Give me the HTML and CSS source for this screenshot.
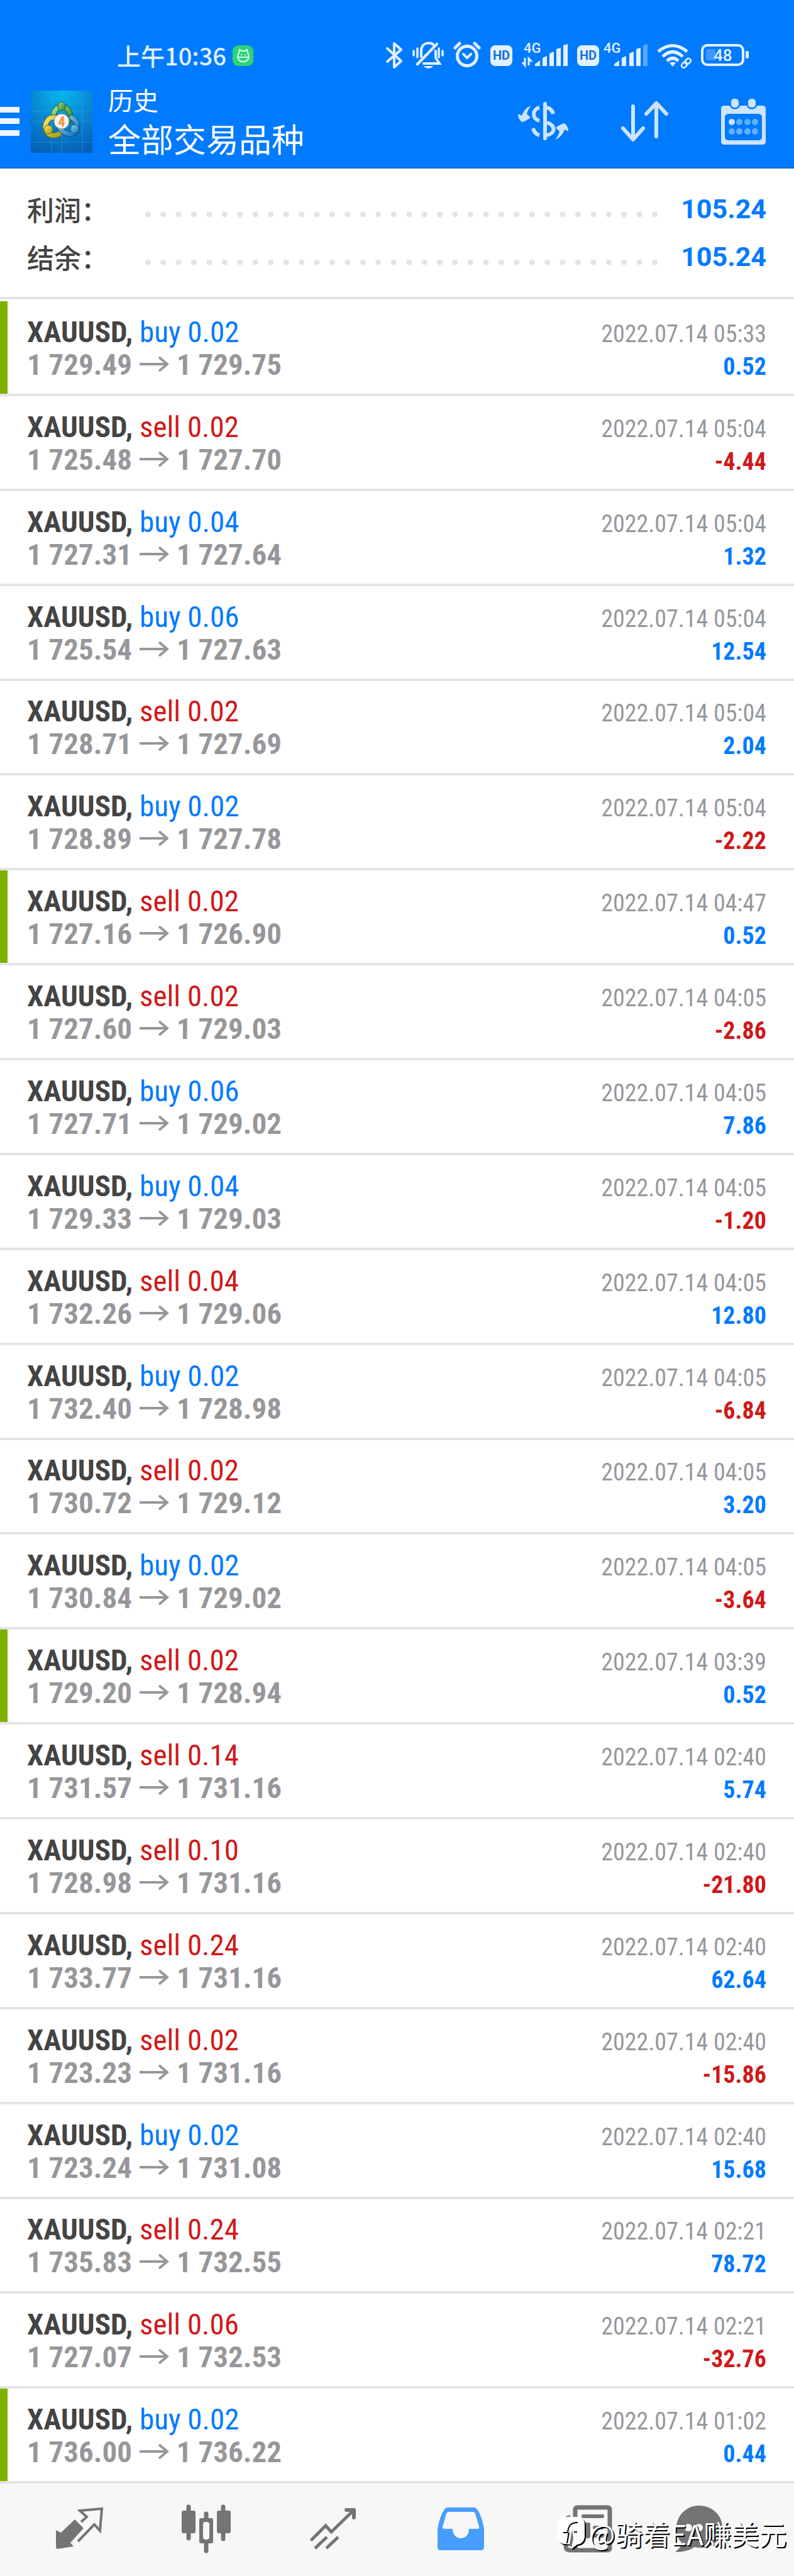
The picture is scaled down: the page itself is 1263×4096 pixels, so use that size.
FILE: index.html
```html
<!DOCTYPE html>
<html lang="zh-CN">
<head>
    <meta charset="utf-8">
    <meta name="viewport" content="width=device-width, initial-scale=1">
    <title>历史</title>
    <link rel="stylesheet" href="styles.css">
</head>
<body>

    <svg class="defs" aria-hidden="true">
        <symbol id="arrow" viewBox="0 0 47 26">
            <path d="M0 13H43M31 2L44 13L31 24" fill="none" stroke="currentColor" stroke-width="4" />
        </symbol>
    </svg>

    <header class="header">
        <div class="status">
            <span class="clock">上午10:36</span>
            <svg class="app-dot" width="33" height="33" viewBox="0 0 33 33">
                <rect width="33" height="33" rx="9" fill="#2bd672" />
                <path d="M10 12L11 7L14 9H20L23 7L24 12C28 19 25 26 17 26S6 19 10 12ZM8 19H26" fill="none" stroke="#e2f8ff" stroke-width="2" />
                <circle cx="14" cy="15" r="1" fill="#fff" />
                <circle cx="20" cy="15" r="1" fill="#fff" />
            </svg>
            <div class="tray">
                <svg width="27" height="44" viewBox="0 0 27 44">
                    <path d="M2 11L24 31L13 41V3L24 13L2 32" fill="none" stroke="#e2f1ff" stroke-width="4" stroke-linecap="round" stroke-linejoin="round" />
                </svg>
                <svg width="50" height="44" viewBox="0 0 50 44" fill="none" stroke="#e2f1ff" stroke-width="3.5" stroke-linecap="round">
                    <path d="M2 15V22M8 11V25M42 11V25M48 15V22" />
                    <path d="M14 24V14C15 0 32 0 35 7M37 15V26L43 35H18" stroke-width="4" />
                    <path d="M39 4L8 36" stroke-width="4.5" />
                    <path d="M18 39H33C30 44 21 44 18 39Z" fill="#e2f1ff" stroke="none" />
                </svg>
                <svg width="44" height="44" viewBox="0 0 44 44" fill="none" stroke="#e2f1ff" stroke-width="5" stroke-linecap="round">
                    <circle cx="22" cy="23" r="15.5" />
                    <path d="M16 20L22 26L28 20" stroke-width="4" />
                    <path d="M3 10L10 3M34 3L41 10" />
                </svg>
                <span class="hd">HD</span>
                <svg width="73" height="44" viewBox="0 0 73 44" fill="#e2f1ff">
                    <text x="3" y="18" class="net">4G</text>
                    <path d="M5 26V38L1 33M11 38V27L16 32" fill="none" stroke="#e2f1ff" stroke-width="3" />
                    <path d="M21 36L29 30V39H21ZM33 26L40 23V39H33ZM44 19L51 16V39H44ZM55 12L62 10V39H55ZM66 6L73 4V39H66Z" />
                </svg>
                <span class="hd">HD</span>
                <svg class="sim2" width="70" height="44" viewBox="0 0 70 44" fill="#e2f1ff">
                    <text x="0" y="18" class="net">4G</text>
                    <path d="M17 36L25 30V39H17ZM29 26L36 23V39H29ZM41 19L48 16V39H41ZM52 12L59 10V39H52Z" />
                    <path d="M63 6L70 4V39H63Z" fill="#5aa9ff" />
                </svg>
                <svg width="55" height="44" viewBox="0 0 55 44" fill="none" stroke="#e2f1ff" stroke-width="5">
                    <path d="M2 16Q25 -3 48 16M9 24Q25 9 41 24M16 31Q25 22 34 31" />
                    <path d="M20 34Q25 31 30 34L25 40Z" fill="#e2f1ff" stroke="none" />
                    <g stroke-width="2.5" transform="rotate(-45 46 34)">
                        <rect x="37" y="31" width="10" height="7" rx="3.5" />
                        <rect x="45" y="31" width="10" height="7" rx="3.5" />
                    </g>
                </svg>
                <svg width="77" height="44" viewBox="0 0 77 44">
                    <rect x="2" y="6" width="65" height="31" rx="8" fill="none" stroke="#e2f1ff" stroke-width="4" />
                    <path d="M11 12H23V30H11Q8 30 8 27V15Q8 12 11 12Z" fill="#4098ff" />
                    <rect x="71" y="15" width="5" height="12" rx="2" fill="#e2f1ff" />
                    <text x="20" y="31" class="level">48</text>
                </svg>
            </div>
        </div>

        <div class="toolbar">
            <button type="button" class="menu" aria-label="菜单">
                <svg width="31" height="46" viewBox="0 0 31 46" fill="#eef7ff">
                    <rect width="31" height="9" /><rect y="18" width="31" height="9" /><rect y="37" width="31" height="9" />
                </svg>
            </button>
            <svg class="logo" width="98" height="99" viewBox="0 0 98 99">
                <defs>
                    <radialGradient id="lbg" cx=".5" cy=".05" r="1">
                        <stop offset="0" stop-color="#08b6ee" />
                        <stop offset=".6" stop-color="#087dcb" />
                        <stop offset="1" stop-color="#0460b6" />
                    </radialGradient>
                    <linearGradient id="lg" x2="1" y2="1"><stop offset="0" stop-color="#a5dc8e" /><stop offset="1" stop-color="#2b8424" /></linearGradient>
                    <linearGradient id="ly" x2="1" y2="1"><stop offset="0" stop-color="#f0e766" /><stop offset="1" stop-color="#a49c12" /></linearGradient>
                    <linearGradient id="lb" x2="1" y2="1"><stop offset="0" stop-color="#8ed0f2" /><stop offset="1" stop-color="#1672b8" /></linearGradient>
                </defs>
                <rect width="98" height="99" fill="url(#lbg)" />
                <path d="M33 0V99M49 0V99M82 0V99M0 33H98M0 49H98M0 82H98" stroke="#45b5e5" stroke-opacity=".4" />
                <g fill="none" stroke-linecap="round">
                    <path d="M37 44C32 20 66 20 62 44C61 52 55 54 50 48" stroke="#17632b" stroke-width="9" />
                    <path d="M37 44C32 20 66 20 62 44C61 52 55 54 50 48" stroke="url(#lg)" stroke-width="7" />
                    <path d="M38 43C26 41 20 56 25 65C30 73 42 74 49 65" stroke="#625d15" stroke-width="9" />
                    <path d="M38 43C26 41 20 56 25 65C30 73 42 74 49 65" stroke="url(#ly)" stroke-width="7" />
                    <path d="M65 43C75 47 77 63 68 68C59 72 50 66 45 57" stroke="#0b4b85" stroke-width="9" />
                    <path d="M65 43C75 47 77 63 68 68C59 72 50 66 45 57" stroke="url(#lb)" stroke-width="7" />
                </g>
                <ellipse cx="49" cy="25" rx="6" ry="7" fill="url(#lg)" stroke="#17632b" />
                <circle cx="28" cy="62" r="7" fill="url(#ly)" stroke="#625d15" />
                <circle cx="70" cy="61" r="7" fill="url(#lb)" stroke="#0b4b85" />
                <circle cx="49" cy="49" r="12" fill="#f4f4f4" stroke="#8a8a8a" />
                <text x="49" y="57" text-anchor="middle" class="four">4</text>
            </svg>
            <div class="title">
                <div class="sub">历史</div>
                <h1>全部交易品种</h1>
            </div>
            <div class="actions">
                <button type="button" aria-label="货币">
                    <svg width="80" height="64" viewBox="0 0 80 64" fill="none" stroke="#cce4ff" stroke-width="6">
                        <path d="M43 4V59" stroke-linecap="round" />
                        <path d="M34 10C22 13 22 28 34 31M24 43Q26 52 34 54M46 10Q54 12 56 20M46 34C60 38 60 51 46 54" />
                        <path id="swap" d="M21 7C17 11 15 16 14 20L20 26Q12 32 6 33Q0 28 0 20L6 23Q10 11 21 7Z" fill="#cce4ff" stroke="none" />
                        <use href="#swap" transform="rotate(180 40 34)" />
                    </svg>
                </button>
                <button type="button" aria-label="排序">
                    <svg width="75" height="66" viewBox="0 0 75 66" fill="none" stroke="#cce4ff" stroke-width="6" stroke-linecap="round" stroke-linejoin="round">
                        <path d="M19 9V61M3 44L19 62L35 44M56 57V5M40 21L56 4L72 21" />
                    </svg>
                </button>
                <button type="button" aria-label="日期">
                    <svg width="72" height="75" viewBox="0 0 72 75" fill="#cce4ff">
                        <path d="M5 12H66Q71 12 71 17V69Q71 74 66 74H5Q0 74 0 69V17Q0 12 5 12ZM12 25Q6 25 6 31V61Q6 67 12 67H59Q65 67 65 61V31Q65 25 59 25Z" fill-rule="evenodd" />
                        <g stroke="#007aff" stroke-width="5" paint-order="stroke">
                            <rect x="16" y="1" width="12" height="14" rx="5" />
                            <rect x="43" y="1" width="12" height="14" rx="5" />
                        </g>
                        <circle cx="17" cy="38" r="5" />
                        <g fill="#66afff">
                            <circle cx="29" cy="38" r="5" /><circle cx="42" cy="38" r="5" /><circle cx="54" cy="38" r="5" />
                            <circle cx="17" cy="53" r="5" /><circle cx="29" cy="53" r="5" /><circle cx="42" cy="53" r="5" /><circle cx="54" cy="53" r="5" />
                        </g>
                    </svg>
                </button>
            </div>
        </div>
    </header>

    <dl class="summary">
        <div class="sum">
            <dt>利润：</dt>
            <dd>105.24</dd>
        </div>
        <div class="sum">
            <dt>结余：</dt>
            <dd>105.24</dd>
        </div>
    </dl>

    <ul class="deals">
        <li class="mark"><b>XAUUSD, <i class="buy">buy 0.02</i></b><time>2022.07.14 05:33</time><span class="price">1 729.49<svg><use href="#arrow" /></svg>1 729.75</span><em class="up">0.52</em></li>
        <li><b>XAUUSD, <i class="sell">sell 0.02</i></b><time>2022.07.14 05:04</time><span class="price">1 725.48<svg><use href="#arrow" /></svg>1 727.70</span><em class="down">-4.44</em></li>
        <li><b>XAUUSD, <i class="buy">buy 0.04</i></b><time>2022.07.14 05:04</time><span class="price">1 727.31<svg><use href="#arrow" /></svg>1 727.64</span><em class="up">1.32</em></li>
        <li><b>XAUUSD, <i class="buy">buy 0.06</i></b><time>2022.07.14 05:04</time><span class="price">1 725.54<svg><use href="#arrow" /></svg>1 727.63</span><em class="up">12.54</em></li>
        <li><b>XAUUSD, <i class="sell">sell 0.02</i></b><time>2022.07.14 05:04</time><span class="price">1 728.71<svg><use href="#arrow" /></svg>1 727.69</span><em class="up">2.04</em></li>
        <li><b>XAUUSD, <i class="buy">buy 0.02</i></b><time>2022.07.14 05:04</time><span class="price">1 728.89<svg><use href="#arrow" /></svg>1 727.78</span><em class="down">-2.22</em></li>
        <li class="mark"><b>XAUUSD, <i class="sell">sell 0.02</i></b><time>2022.07.14 04:47</time><span class="price">1 727.16<svg><use href="#arrow" /></svg>1 726.90</span><em class="up">0.52</em></li>
        <li><b>XAUUSD, <i class="sell">sell 0.02</i></b><time>2022.07.14 04:05</time><span class="price">1 727.60<svg><use href="#arrow" /></svg>1 729.03</span><em class="down">-2.86</em></li>
        <li><b>XAUUSD, <i class="buy">buy 0.06</i></b><time>2022.07.14 04:05</time><span class="price">1 727.71<svg><use href="#arrow" /></svg>1 729.02</span><em class="up">7.86</em></li>
        <li><b>XAUUSD, <i class="buy">buy 0.04</i></b><time>2022.07.14 04:05</time><span class="price">1 729.33<svg><use href="#arrow" /></svg>1 729.03</span><em class="down">-1.20</em></li>
        <li><b>XAUUSD, <i class="sell">sell 0.04</i></b><time>2022.07.14 04:05</time><span class="price">1 732.26<svg><use href="#arrow" /></svg>1 729.06</span><em class="up">12.80</em></li>
        <li><b>XAUUSD, <i class="buy">buy 0.02</i></b><time>2022.07.14 04:05</time><span class="price">1 732.40<svg><use href="#arrow" /></svg>1 728.98</span><em class="down">-6.84</em></li>
        <li><b>XAUUSD, <i class="sell">sell 0.02</i></b><time>2022.07.14 04:05</time><span class="price">1 730.72<svg><use href="#arrow" /></svg>1 729.12</span><em class="up">3.20</em></li>
        <li><b>XAUUSD, <i class="buy">buy 0.02</i></b><time>2022.07.14 04:05</time><span class="price">1 730.84<svg><use href="#arrow" /></svg>1 729.02</span><em class="down">-3.64</em></li>
        <li class="mark"><b>XAUUSD, <i class="sell">sell 0.02</i></b><time>2022.07.14 03:39</time><span class="price">1 729.20<svg><use href="#arrow" /></svg>1 728.94</span><em class="up">0.52</em></li>
        <li><b>XAUUSD, <i class="sell">sell 0.14</i></b><time>2022.07.14 02:40</time><span class="price">1 731.57<svg><use href="#arrow" /></svg>1 731.16</span><em class="up">5.74</em></li>
        <li><b>XAUUSD, <i class="sell">sell 0.10</i></b><time>2022.07.14 02:40</time><span class="price">1 728.98<svg><use href="#arrow" /></svg>1 731.16</span><em class="down">-21.80</em></li>
        <li><b>XAUUSD, <i class="sell">sell 0.24</i></b><time>2022.07.14 02:40</time><span class="price">1 733.77<svg><use href="#arrow" /></svg>1 731.16</span><em class="up">62.64</em></li>
        <li><b>XAUUSD, <i class="sell">sell 0.02</i></b><time>2022.07.14 02:40</time><span class="price">1 723.23<svg><use href="#arrow" /></svg>1 731.16</span><em class="down">-15.86</em></li>
        <li><b>XAUUSD, <i class="buy">buy 0.02</i></b><time>2022.07.14 02:40</time><span class="price">1 723.24<svg><use href="#arrow" /></svg>1 731.08</span><em class="up">15.68</em></li>
        <li><b>XAUUSD, <i class="sell">sell 0.24</i></b><time>2022.07.14 02:21</time><span class="price">1 735.83<svg><use href="#arrow" /></svg>1 732.55</span><em class="up">78.72</em></li>
        <li><b>XAUUSD, <i class="sell">sell 0.06</i></b><time>2022.07.14 02:21</time><span class="price">1 727.07<svg><use href="#arrow" /></svg>1 732.53</span><em class="down">-32.76</em></li>
        <li class="mark"><b>XAUUSD, <i class="buy">buy 0.02</i></b><time>2022.07.14 01:02</time><span class="price">1 736.00<svg><use href="#arrow" /></svg>1 736.22</span><em class="up">0.44</em></li>
    </ul>

    <nav class="tabs">
        <a href="#quotes" aria-label="行情">
            <svg width="76" height="68" viewBox="0 0 76 68">
                <path d="M1 36L9 40L31 19L45 33L24 56L29 62L3 66L1 64Z" fill="#747474" />
                <path d="M41 23L50 15L39 5L74 2L71 37L62 27L36 54" fill="none" stroke="#747474" stroke-width="4" />
            </svg>
        </a>
        <a href="#chart" aria-label="图表">
            <svg width="78" height="76" viewBox="0 0 78 76" fill="#747474">
                <path d="M11 3V53M39 14V73M66 3V54" stroke="#747474" stroke-width="7" stroke-linecap="round" />
                <rect x="0" y="9" width="22" height="36" rx="3" />
                <rect x="56" y="9" width="22" height="36" rx="3" />
                <rect x="28" y="21" width="22" height="40" rx="3" />
                <rect x="34" y="27" width="10" height="28" rx="4" fill="#f7f7f7" />
            </svg>
        </a>
        <a href="#trade" aria-label="交易">
            <svg width="74" height="68" viewBox="0 0 74 68" fill="none" stroke="#747474" stroke-width="5" stroke-linecap="round">
                <path d="M3 51L25 29L34 39L70 4" />
                <path d="M8 65L27 47M26 65L45 47" stroke-linecap="butt" />
                <path d="M58 4H70V16" stroke-width="6" stroke-linejoin="round" />
            </svg>
        </a>
        <a href="#history" aria-label="历史">
            <svg width="74" height="68" viewBox="0 0 74 68">
                <path d="M0 34Q4 12 11 3Q13 0 16 0H58Q61 0 63 3Q70 12 74 34V63Q74 68 69 68H5Q0 68 0 63ZM8 31Q8 34 11 34H24C24 54 50 54 50 34H63Q67 34 66 30L60 10Q59 7 56 7H18Q15 7 14 10Z" fill="#479eff" fill-rule="evenodd" />
            </svg>
        </a>
        <a href="#news" aria-label="新闻">
            <svg width="78" height="74" viewBox="0 0 78 74" fill="none" stroke="#747474" stroke-width="7">
                <rect x="19" y="3" width="55" height="68" rx="3" />
                <path d="M11 19Q4 18 4 27V64Q4 71 11 71H20" />
                <path d="M32 17H62M50 35H62M50 48H62" stroke-width="6" stroke-linecap="round" />
                <rect x="29" y="27" width="14" height="25" rx="3" fill="#747474" stroke="none" />
            </svg>
        </a>
        <a href="#chat" aria-label="消息">
            <svg width="124" height="74" viewBox="0 0 124 74">
                <path d="M37 0C57 0 74 15 74 34C74 57 53 72 30 66Q17 74 1 74Q-1 73 2 71Q9 66 9 59C-10 36 6 0 37 0Z" fill="#747474" />
                <circle cx="20" cy="35" r="6" fill="#f7f7f7" /><circle cx="37" cy="35" r="6" fill="#f7f7f7" /><circle cx="54" cy="35" r="6" fill="#f7f7f7" />
            </svg>
        </a>

        <div class="watermark">
            <svg width="46" height="53" viewBox="0 0 46 53">
                <path d="M12 0H32C40 0 44 6 44 12V30C44 39 39 43 32 44L23 51L21 44L11 43C4 42 0 37 0 30V12C0 5 4 0 12 0Z" fill="#000" transform="translate(2 2)" />
                <path d="M12 0H32C40 0 44 6 44 12V30C44 39 39 43 32 44L23 51L21 44L11 43C4 42 0 37 0 30V12C0 5 4 0 12 0Z" fill="#fff" />
                <path d="M10 25H17C18 14 22 9 33 9M16 42L19 25M27 24H32" fill="none" stroke="#000" stroke-width="2" />
                <path d="M24 20L26 34L23 49L20 44Z" fill="#747474" />
            </svg>
            <span>@骑着EA赚美元</span>
        </div>
    </nav>

</body>
</html>
```
FILE: styles.css
```css
* {
    box-sizing: border-box;
}

body {
    margin: 0;
    min-height: 100vh;
    display: flex;
    flex-direction: column;
    background: #fff;
    font-family: "Roboto Condensed", Roboto, "Noto Sans CJK SC", sans-serif;
    color: #444;
}

svg {
    display: block;
    flex: none;
    overflow: visible;
}

button {
    display: block;
    padding: 0;
    border: 0;
    background: none;
    cursor: pointer;
}

.defs {
    position: absolute;
    width: 0;
    height: 0;
}

/* header */
.header {
    background: #007aff;
    border-bottom: 2px solid #1a68bd;
    color: #fff;
    font-family: "Noto Sans CJK SC", sans-serif;
}

.status {
    display: flex;
    align-items: center;
    height: 128px;
    padding: 48px 71px 0 186px;
}

.clock {
    font-size: 38px;
    line-height: 56px;
    font-weight: 500;
    color: #e2f1ff;
}

.app-dot {
    margin-left: 10px;
}

.tray {
    display: flex;
    align-items: center;
    gap: 15px;
    margin-left: auto;
}

.sim2 {
    margin-left: -8px;
}

.hd {
    width: 35px;
    height: 33px;
    border-radius: 8px;
    background: #e2f1ff;
    color: #1a6fd6;
    font: 700 20px/33px Roboto, sans-serif;
    text-align: center;
}

.net {
    font: 500 22px Roboto, sans-serif;
}

.level {
    font: 500 26px Roboto, sans-serif;
    fill: #e2f1ff;
}

.four {
    font: 700 22px "Roboto Condensed", Roboto, sans-serif;
    fill: #ee9440;
}

.toolbar {
    display: flex;
    align-items: center;
    height: 138px;
    padding: 0 44px 8px 0;
}

.logo {
    margin-left: 18px;
}

.title {
    margin-left: 25px;
}

.sub {
    font-size: 40px;
    line-height: 54px;
}

.title h1 {
    margin: 0;
    font-size: 52px;
    line-height: 70px;
    font-weight: 400;
}

.actions {
    display: flex;
    align-items: center;
    gap: 84px;
    margin-left: auto;
}

/* totals */
.summary {
    margin: 0;
    padding: 26px 44px 26px 43px;
    border-bottom: 4px solid #e4e4e4;
}

.sum {
    display: flex;
    align-items: center;
    height: 76px;
    font-size: 43px;
    line-height: 76px;
    font-weight: 500;
}

.sum dt {
    width: 180px;
    font-family: "Noto Sans CJK SC", sans-serif;
}

.sum dd {
    display: flex;
    flex: 1;
    margin: 0;
    color: #007aff;
    font-family: Roboto, sans-serif;
    font-weight: 700;
}

/* dotted leader, 34 dots */
.sum dd::before {
    content: "";
    flex: 1;
    margin-right: 29px;
    background: radial-gradient(circle, #e4e4e4 4px, transparent 5px) 0 37px / calc(100% / 34) 20px repeat-x;
}

/* deals */
.deals {
    flex: 1;
    display: flex;
    flex-direction: column;
    margin: 0;
    padding: 3px 0 0;
    list-style: none;
}

.deals li {
    flex: 1;
    display: grid;
    grid-template-columns: 1fr auto;
    align-content: center;
    align-items: baseline;
    padding: 3px 44px 0 43px;
    border-bottom: 4px solid #e4e4e4;
    font-size: 47px;
    line-height: 52px;
}

.deals .mark {
    background: linear-gradient(#7fb000, #7fb000) 0 0 / 12px 100% no-repeat;
}

.deals i {
    font-style: normal;
    font-weight: 400;
}

.deals time {
    font-size: 38px;
    line-height: 46px;
    color: #96979b;
}

.deals em {
    font-size: 38px;
    line-height: 46px;
    font-style: normal;
    font-weight: 700;
    text-align: right;
}

.price {
    color: #96979b;
    font-weight: 700;
}

.price svg {
    display: inline-block;
    width: 47px;
    height: 26px;
    margin: 0 12px;
    vertical-align: 4px;
}

.buy, .up {
    color: #007aff;
}

.sell, .down {
    color: #d01818;
}

/* bottom tabs */
.tabs {
    position: relative;
    display: grid;
    grid-template-columns: repeat(6, 1fr);
    align-items: center;
    height: 147px;
    padding: 0 25px 4px;
    background: #f7f7f7;
}

.tabs a {
    display: flex;
    justify-content: center;
}

.watermark {
    position: absolute;
    right: 12px;
    bottom: 36px;
    display: flex;
    align-items: center;
    gap: 5px;
    color: #fff;
    font: 400 44px/64px "Noto Sans CJK SC", sans-serif;
    text-shadow: 2px 2px 0 #000;
}
```
